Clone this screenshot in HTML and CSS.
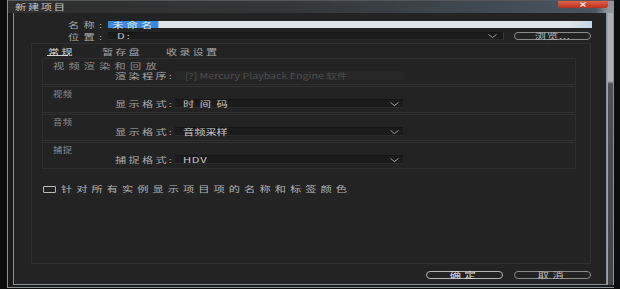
FILE: index.html
```
<!DOCTYPE html>
<html lang="zh-CN">
<head>
    <meta charset="UTF-8">
    <title>新建项目</title>
    <link rel="stylesheet" href="styles.css">
</head>
<body>
    <div class="window">
        <div class="titlebar">
            <span class="t title">新建项目</span>
            <span class="close">
                <svg width="8" height="5" viewBox="0 0 8 5"><path d="M1.5 0.5 L6.5 4.5 M6.5 0.5 L1.5 4.5" stroke="#fff" stroke-width="1.1" fill="none"/></svg>
            </span>
        </div>
        <div class="frame">
            <div class="client">
                <div class="field-row first">
                    <span class="field-label"><span class="t">名称:</span></span>
                    <div class="text-input"><span class="t selection">未命名</span></div>
                </div>
                <div class="field-row">
                    <span class="field-label"><span class="t">位置:</span></span>
                    <div class="dropdown location">
                        <span class="t">D:</span>
                        <svg class="chevron" width="9" height="4" viewBox="0 0 9 4"><polyline points="0.5,0.5 4.5,3.5 8.5,0.5" fill="none" stroke="#9a9a9a"/></svg>
                    </div>
                    <button class="pill browse"><span class="t">浏览...</span></button>
                </div>

                <div class="panel">
                    <div class="tabs">
                        <span class="tab active"><span class="t">常规</span></span>
                        <span class="tab"><span class="t">暂存盘</span></span>
                        <span class="tab"><span class="t">收录设置</span></span>
                    </div>

                    <div class="group">
                        <div class="group-title"><span class="t long">视频渲染和回放</span></div>
                        <div class="group-row">
                            <span class="group-label"><span class="t">渲染程序:</span></span>
                            <div class="dropdown disabled"><span class="t">[?] Mercury Playback Engine 软件</span></div>
                        </div>
                    </div>

                    <div class="group">
                        <div class="group-title"><span class="t">视频</span></div>
                        <div class="group-row">
                            <span class="group-label"><span class="t">显示格式:</span></span>
                            <div class="dropdown">
                                <span class="t value-wide">时间码</span>
                                <svg class="chevron" width="9" height="4" viewBox="0 0 9 4"><polyline points="0.5,0.5 4.5,3.5 8.5,0.5" fill="none" stroke="#9a9a9a"/></svg>
                            </div>
                        </div>
                    </div>

                    <div class="group">
                        <div class="group-title"><span class="t">音频</span></div>
                        <div class="group-row">
                            <span class="group-label"><span class="t">显示格式:</span></span>
                            <div class="dropdown">
                                <span class="t">音频采样</span>
                                <svg class="chevron" width="9" height="4" viewBox="0 0 9 4"><polyline points="0.5,0.5 4.5,3.5 8.5,0.5" fill="none" stroke="#9a9a9a"/></svg>
                            </div>
                        </div>
                    </div>

                    <div class="group">
                        <div class="group-title"><span class="t">捕捉</span></div>
                        <div class="group-row">
                            <span class="group-label"><span class="t">捕捉格式:</span></span>
                            <div class="dropdown">
                                <span class="t latin">HDV</span>
                                <svg class="chevron" width="9" height="4" viewBox="0 0 9 4"><polyline points="0.5,0.5 4.5,3.5 8.5,0.5" fill="none" stroke="#9a9a9a"/></svg>
                            </div>
                        </div>
                    </div>

                    <div class="check">
                        <span class="box"></span>
                        <span class="t">针对所有实例显示项目项的名称和标签颜色</span>
                    </div>
                </div>

                <div class="actions">
                    <button class="pill primary"><span class="t">确定</span></button>
                    <button class="pill"><span class="t">取消</span></button>
                </div>
            </div>
            <div class="rail"></div>
        </div>
    </div>
</body>
</html>
```

FILE: styles.css
```
/* Basic reset */
* {
    margin: 0;
    padding: 0;
    box-sizing: border-box;
}

body {
    background-color: #0d0d0d;
    font-family: "Noto Sans CJK SC", "Noto Sans", sans-serif;
    font-size: 8px;
    color: #a8a8a8;
}

/* Wide text: the dialog glyphs are drawn stretched */
.t {
    display: inline-block;
    white-space: nowrap;
    line-height: 8px;
    transform: scaleX(1.4);
    transform-origin: 0 50%;
}

/* Window frame */
.window {
    margin-left: 7px;
    width: 607px;
    height: 288px;
    display: flex;
    flex-direction: column;
    background-color: #1a1a1a;
    border-left: 1px solid #8b9198;
    border-bottom: 1px solid #8b9198;
}

.titlebar {
    height: 13px;
    flex: none;
    display: flex;
    align-items: flex-start;
    background: linear-gradient(to right, #2e2e2e 0%, #343536 45%, #3f4a54 80%, #4c5660 97%, #8e949a 99%);
    border-top: 1px solid #55595e;
}

.title {
    margin: 2px 0 0 7px;
    letter-spacing: 1.2px;
    color: #c6c6c6;
}

.close {
    margin-left: auto;
    margin-right: 6px;
    width: 50px;
    height: 7px;
    display: flex;
    align-items: center;
    justify-content: center;
    background: linear-gradient(#e0604a, #b9301d);
    border-radius: 0 0 3px 3px;
}

.frame {
    flex: 1;
    display: flex;
    padding: 0 0 2px 5px;
}

.client {
    flex: 1;
    display: flex;
    flex-direction: column;
    padding-top: 8px;
    background-color: #232323;
    border-left: 1px solid #8b9198;
    border-right: 1px solid #8b9198;
    border-bottom: 1px solid #8b9198;
}

.rail {
    width: 7px;
    border-left: 1px solid #9ca2a8;
    border-right: 1px solid #8b9198;
    background: linear-gradient(#aab0b6 0, #aab0b6 68px, #4b5157 71px, #3f4449 100%);
}

/* Name and location rows */
.field-row {
    display: flex;
    align-items: center;
    height: 8px;
    margin-right: 15px;
}

.field-row.first {
    height: 7px;
    margin-right: 14px;
}

.field-row + .field-row {
    margin-top: 4px;
}

.field-label {
    width: 92px;
    flex: none;
    text-align: right;
    color: #ababab;
}

.field-label .t,
.group-label .t {
    transform-origin: 100% 50%;
}

.field-label .t {
    letter-spacing: 3px;
}

.text-input {
    flex: 1;
    height: 7px;
    margin-left: 2px;
    display: flex;
    align-items: center;
    background: linear-gradient(to right, #dfe5eb 95%, #c5d7ea);
}

.selection {
    height: 7px;
    line-height: 7px;
    padding: 0 2px 0 3px;
    letter-spacing: 2.3px;
    background-color: #3b88da;
    color: #e4eef8;
}

/* Dropdowns */
.dropdown {
    height: 9px;
    display: flex;
    align-items: center;
    padding-left: 8px;
    background-color: #1b1b1b;
    border-top: 1px solid #151515;
    border-bottom: 1px solid #2b2b2b;
    color: #cacaca;
}

.dropdown .chevron {
    margin-left: auto;
    margin-right: 4px;
}

.location {
    flex: 1;
    height: 8px;
    margin-left: 2px;
    padding-left: 9px;
    border-right: 1px solid #383838;
}

.location .t {
    letter-spacing: 1.5px;
}

.location .chevron {
    margin-right: 6px;
}

.dropdown.disabled {
    background-color: #272727;
    border-color: #272727;
    color: #4e4e4e;
    padding-left: 10px;
}

.disabled .t {
    transform: scaleX(1.33);
}

.value-wide {
    letter-spacing: 4px;
}

.latin {
    letter-spacing: 0.5px;
}

/* Pill buttons */
.pill {
    height: 8px;
    width: 77px;
    flex: none;
    display: flex;
    align-items: center;
    justify-content: center;
    border: 1px solid #8a8a8a;
    border-radius: 5px;
    background: transparent;
    color: #bdbdbd;
    font: inherit;
}

.pill .t {
    transform-origin: 50% 50%;
    letter-spacing: 2.6px;
}

.browse {
    margin-left: 10px;
}

.browse .t {
    letter-spacing: 0.6px;
}

.pill.primary {
    border-color: #b4b4b4;
    color: #e2e2e2;
}

/* Tab panel */
.panel {
    height: 221px;
    margin: 3px 15px 0 17px;
    border: 1px solid #303030;
}

.tabs {
    display: flex;
    gap: 33px;
    height: 12px;
    padding-left: 15px;
}

.tab {
    padding: 2px 1px 0;
    height: 12px;
    width: auto;
    border-bottom: 1px solid transparent;
    color: #a6a6a6;
}

.tab .t {
    letter-spacing: 1.5px;
    line-height: 9px;
}

.tab.active {
    border-bottom-color: #d4d4d4;
    color: #d8d8d8;
}

.tab.active .t {
    transform-origin: 0 50%;
}

.group {
    margin: 2px 14px 0 10px;
    padding: 1px 0 4px;
    border: 1px solid #2e2e2e;
}

.group + .group {
    margin-top: 1px;
}

.group-title {
    padding-left: 10px;
    height: 8px;
    color: #8f8f8f;
}

.group-title .t {
    transform: scaleX(1.15);
    letter-spacing: 0.5px;
}

.group-title .long {
    transform: scaleX(1.4);
    letter-spacing: 3px;
}

.group-row {
    display: flex;
    align-items: center;
    height: 9px;
    margin-top: 3px;
}

.group-label {
    width: 131px;
    flex: none;
    text-align: right;
    color: #a9a9a9;
}

.group-label .t {
    letter-spacing: 1.6px;
}

.group-row .dropdown {
    width: 228px;
    margin-left: 1px;
}

/* Checkbox row */
.check {
    display: flex;
    align-items: center;
    margin: 16px 0 0 11px;
    color: #b4b4b4;
}

.check .box {
    width: 13px;
    height: 7px;
    border: 1px solid #b8b8b8;
    border-radius: 1px;
    margin-right: 5px;
}

.check .t {
    letter-spacing: 2.9px;
}

/* Dialog buttons */
.actions {
    display: flex;
    justify-content: flex-end;
    gap: 11px;
    margin: 7px 15px 0 0;
}
```
